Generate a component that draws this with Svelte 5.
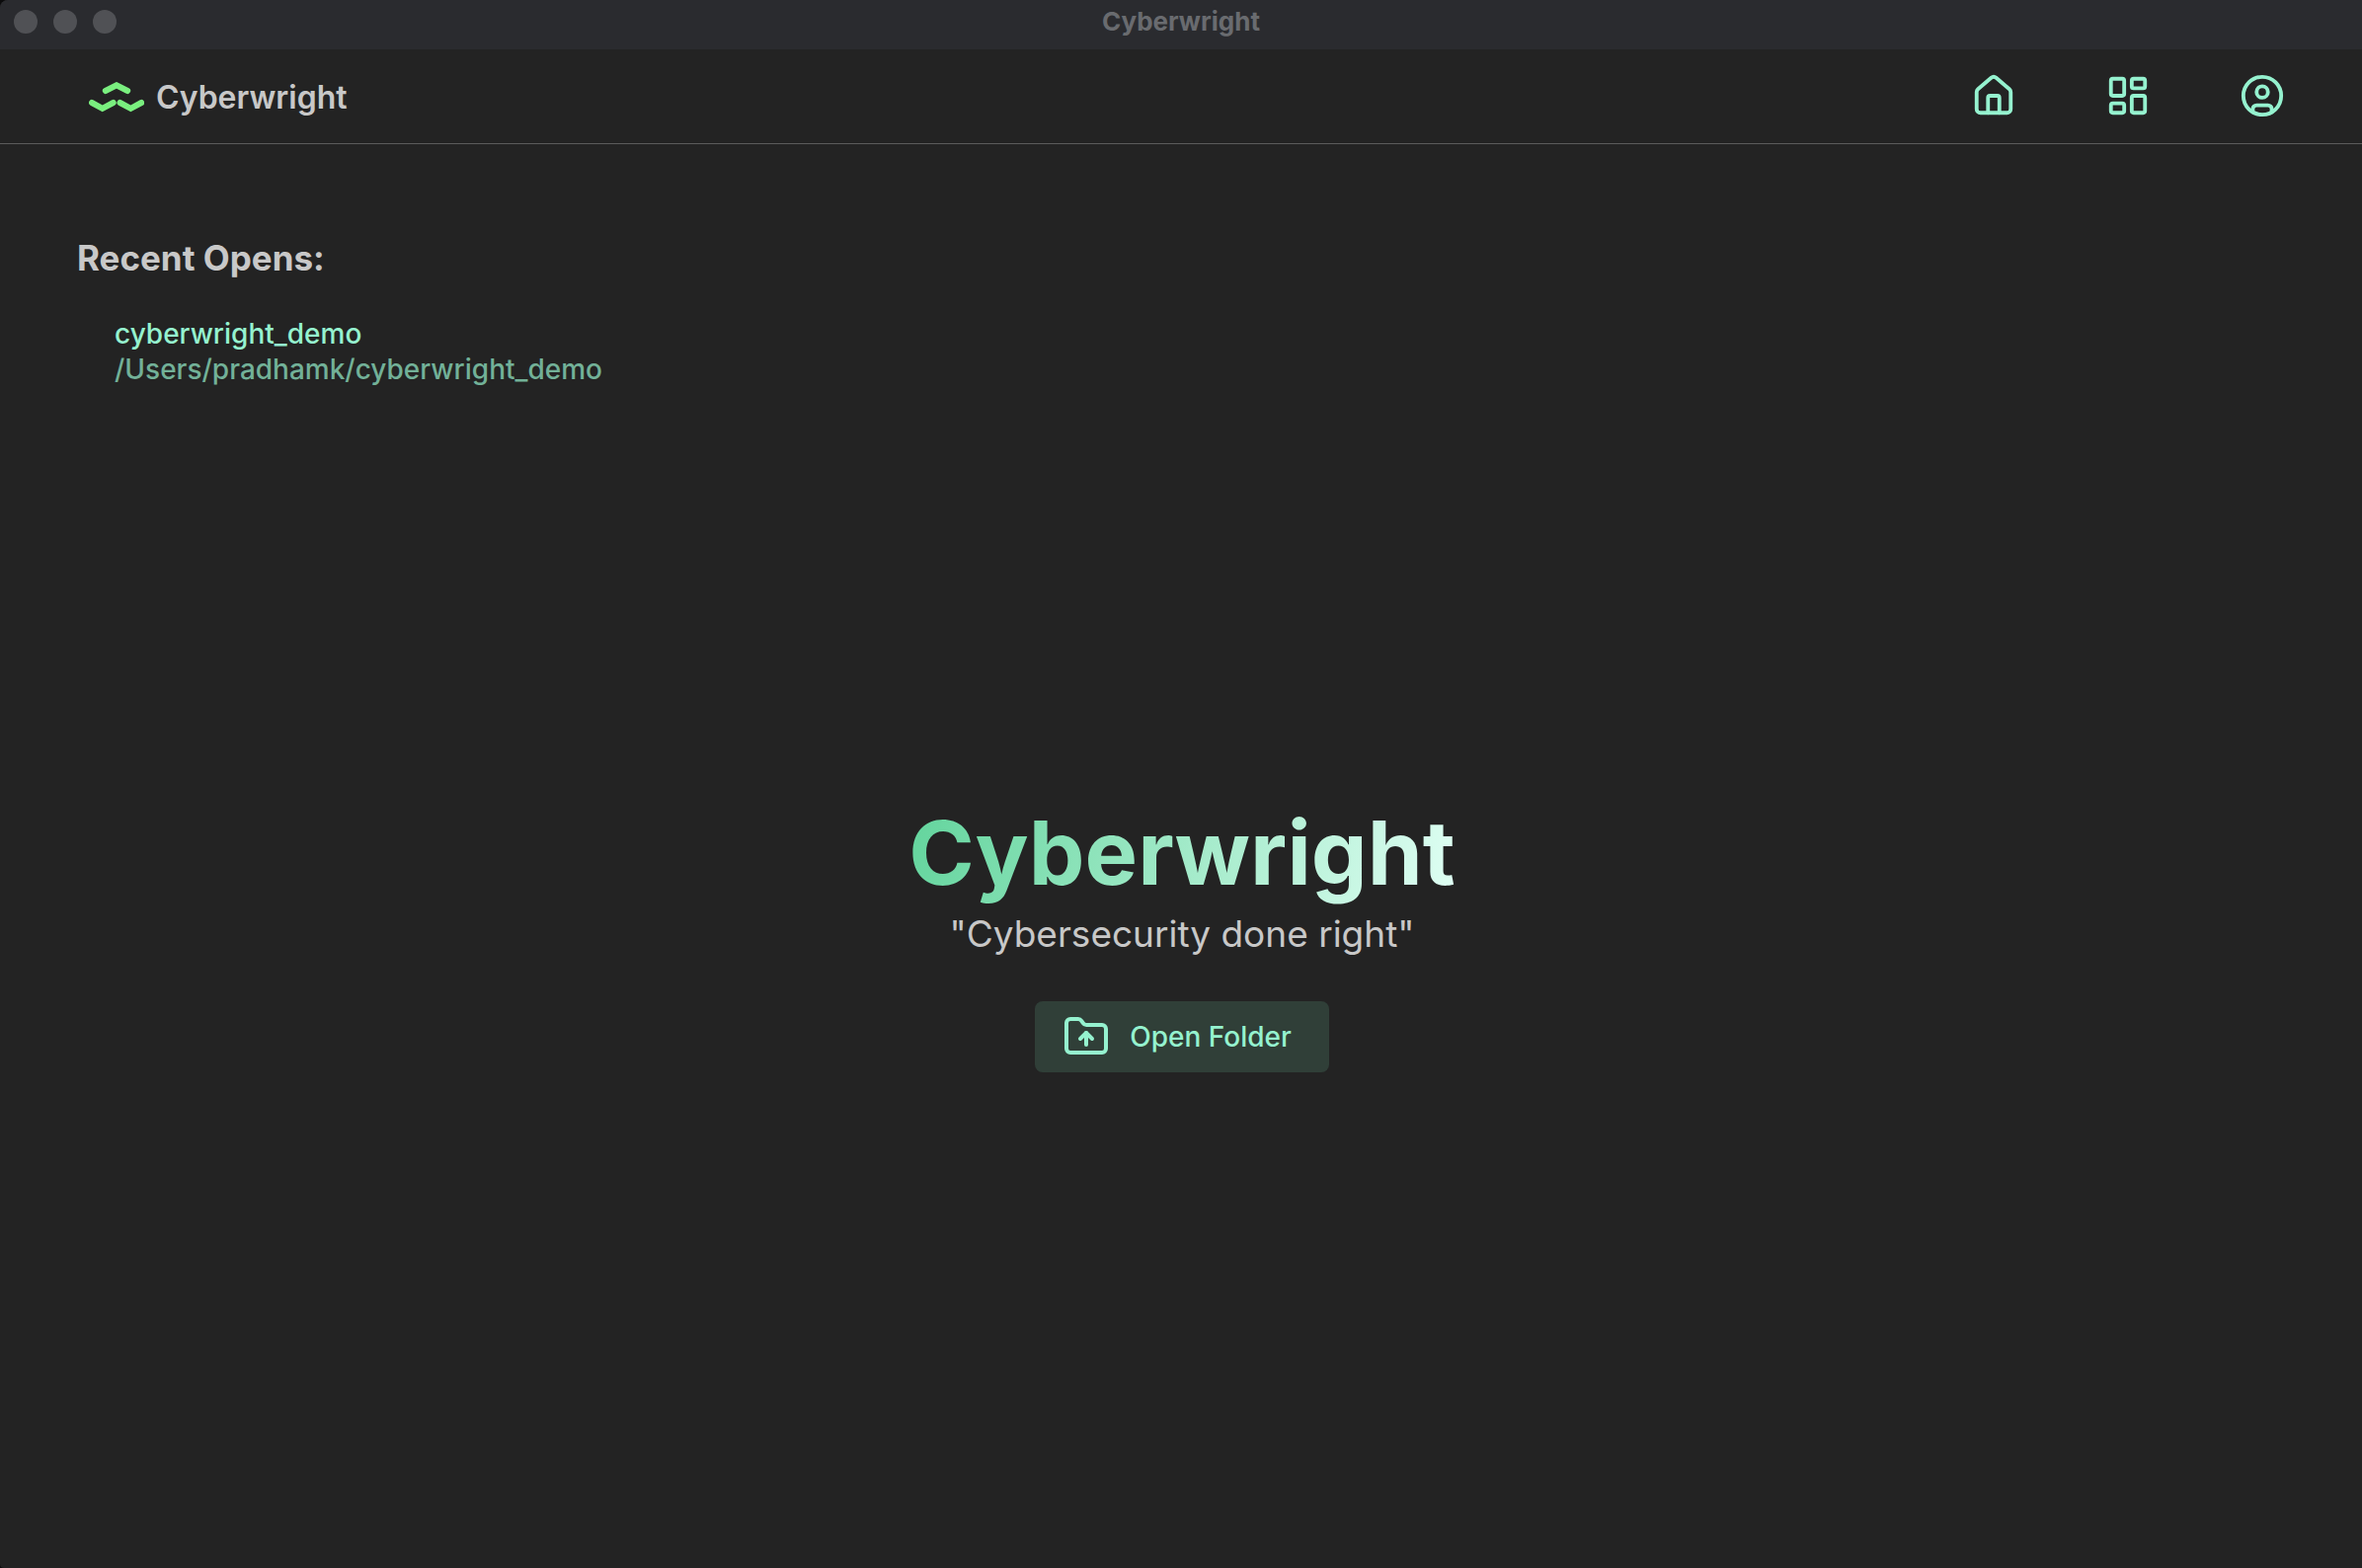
<script>
  const recents = [
    { name: 'cyberwright_demo', path: '/Users/pradhamk/cyberwright_demo' }
  ];
</script>

<div class="window">
  <header class="titlebar">
    <div class="lights">
      <span class="light"></span>
      <span class="light"></span>
      <span class="light"></span>
    </div>
    <span class="window-title">Cyberwright</span>
  </header>

  <nav class="navbar">
    <a class="brand" href="#home">
      <svg class="logo" viewBox="0 0 56 32" aria-hidden="true">
        <path d="M16.800 9 28 3.300l11.200 5.700" />
        <path d="M3 21 13.700 26.800l11-5.800" />
        <path d="M31.500 21 42.400 26.800l10.800-5.800" />
      </svg>
      <span>Cyberwright</span>
    </a>
    <div class="links">
      <a href="#home" aria-label="Home">
        <svg class="icon" viewBox="0 0 24 24">
          <path d="M15 21v-8a1 1 0 0 0-1-1h-4a1 1 0 0 0-1 1v8" />
          <path d="M3 10a2 2 0 0 1 .709-1.528l7-5.999a2 2 0 0 1 2.582 0l7 5.999A2 2 0 0 1 21 10v9a2 2 0 0 1-2 2H5a2 2 0 0 1-2-2z" />
        </svg>
      </a>
      <a href="#dashboard" aria-label="Dashboard">
        <svg class="icon" viewBox="0 0 24 24">
          <rect width="7" height="9" x="3" y="3" rx="1" />
          <rect width="7" height="5" x="14" y="3" rx="1" />
          <rect width="7" height="9" x="14" y="12" rx="1" />
          <rect width="7" height="5" x="3" y="16" rx="1" />
        </svg>
      </a>
      <a href="#account" aria-label="Account">
        <svg class="icon" viewBox="0 0 24 24">
          <circle cx="12" cy="12" r="10" />
          <circle cx="12" cy="10" r="3" />
          <path d="M7 20.662V19a2 2 0 0 1 2-2h6a2 2 0 0 1 2 2v1.662" />
        </svg>
      </a>
    </div>
  </nav>

  <main>
    <section class="recents">
      <h2>Recent Opens:</h2>
      <ul>
        {#each recents as item}
          <li>
            <a href="#open">
              <span class="name">{item.name}</span>
              <span class="path">{item.path}</span>
            </a>
          </li>
        {/each}
      </ul>
    </section>

    <section class="hero">
      <h1>Cyberwright</h1>
      <p>"Cybersecurity done right"</p>
      <button type="button">
        <svg class="icon folder" viewBox="0 0 24 24" aria-hidden="true">
          <path d="M20 20a2 2 0 0 0 2-2V8a2 2 0 0 0-2-2h-7.900a2 2 0 0 1-1.690-.9L9.600 3.900A2 2 0 0 0 7.930 3H4a2 2 0 0 0-2 2v13a2 2 0 0 0 2 2Z" />
          <path d="M12 10v6" />
          <path d="m9 13 3-3 3 3" />
        </svg>
        <span>Open Folder</span>
      </button>
    </section>
  </main>
</div>

<style>
  :global(body) {
    margin: 0;
    background: #0b0b0c;
  }

  .window {
    display: flex;
    flex-direction: column;
    min-height: 100vh;
    overflow: hidden;
    border-radius: 8px 0 0 4px;
    background: #232323;
    color: #c8c8c8;
    font-family: Inter, 'Liberation Sans', sans-serif;
  }

  .titlebar {
    display: grid;
    grid-template-columns: 1fr auto 1fr;
    align-items: center;
    height: 44px;
    padding: 0 14px 6px;
    background: #2a2b2f;
  }

  .lights {
    display: flex;
    gap: 16px;
  }

  .light {
    width: 24px;
    height: 24px;
    border-radius: 50%;
    background: #505155;
  }

  .window-title {
    color: #696b6f;
    font-size: 26px;
    line-height: 32px;
    font-weight: 700;
  }

  .navbar {
    display: flex;
    align-items: center;
    justify-content: space-between;
    height: 95px;
    padding: 0 78px 0 90px;
    border-bottom: 1px solid #5b5b5b;
  }

  .brand {
    display: flex;
    align-items: center;
    gap: 12px;
    padding-top: 2px;
    color: inherit;
    font-size: 32px;
    line-height: 40px;
    font-weight: 600;
    text-decoration: none;
  }

  .logo {
    width: 56px;
    height: 32px;
    fill: none;
    stroke: #7aef7f;
    stroke-width: 6;
    stroke-linecap: round;
    stroke-linejoin: miter;
  }

  .links {
    display: flex;
    gap: 90px;
    padding-bottom: 2px;
  }

  .links a {
    display: flex;
  }

  .icon {
    width: 46px;
    height: 46px;
    fill: none;
    stroke: #95f2cf;
    stroke-width: 2;
    stroke-linecap: round;
    stroke-linejoin: round;
  }

  main {
    display: flex;
    flex: 1;
    flex-direction: column;
  }

  .recents {
    padding: 90px 78px 0;
  }

  h2 {
    margin: 0;
    font-size: 35px;
    line-height: 50px;
    font-weight: 700;
  }

  ul {
    margin: 34px 0 0;
    padding: 0 0 0 38px;
    list-style: none;
  }

  li a {
    display: inline-flex;
    flex-direction: column;
    color: #95f2cf;
    font-size: 28px;
    line-height: 36px;
    font-weight: 500;
    text-decoration: none;
  }

  .path {
    color: #72b198;
  }

  .hero {
    display: flex;
    flex: 1;
    flex-direction: column;
    align-items: center;
    justify-content: center;
    padding: 0 0 86px 2px;
  }

  h1 {
    margin: 0;
    background: linear-gradient(105deg, #62d49c, #e0fff4);
    background-clip: text;
    color: transparent;
    font-size: 90px;
    line-height: 112px;
    font-weight: 700;
  }

  p {
    margin: 0;
    font-size: 37px;
    line-height: 52px;
  }

  button {
    display: flex;
    align-items: center;
    gap: 20px;
    margin: 42px 0 0;
    padding: 12px 38px 12px 28px;
    border: 0;
    border-radius: 8px;
    background: #303f38;
    color: #95f2cf;
    font: 500 28px/36px Inter, 'Liberation Sans', sans-serif;
    cursor: pointer;
  }

  .folder {
    width: 48px;
    height: 48px;
  }
</style>
